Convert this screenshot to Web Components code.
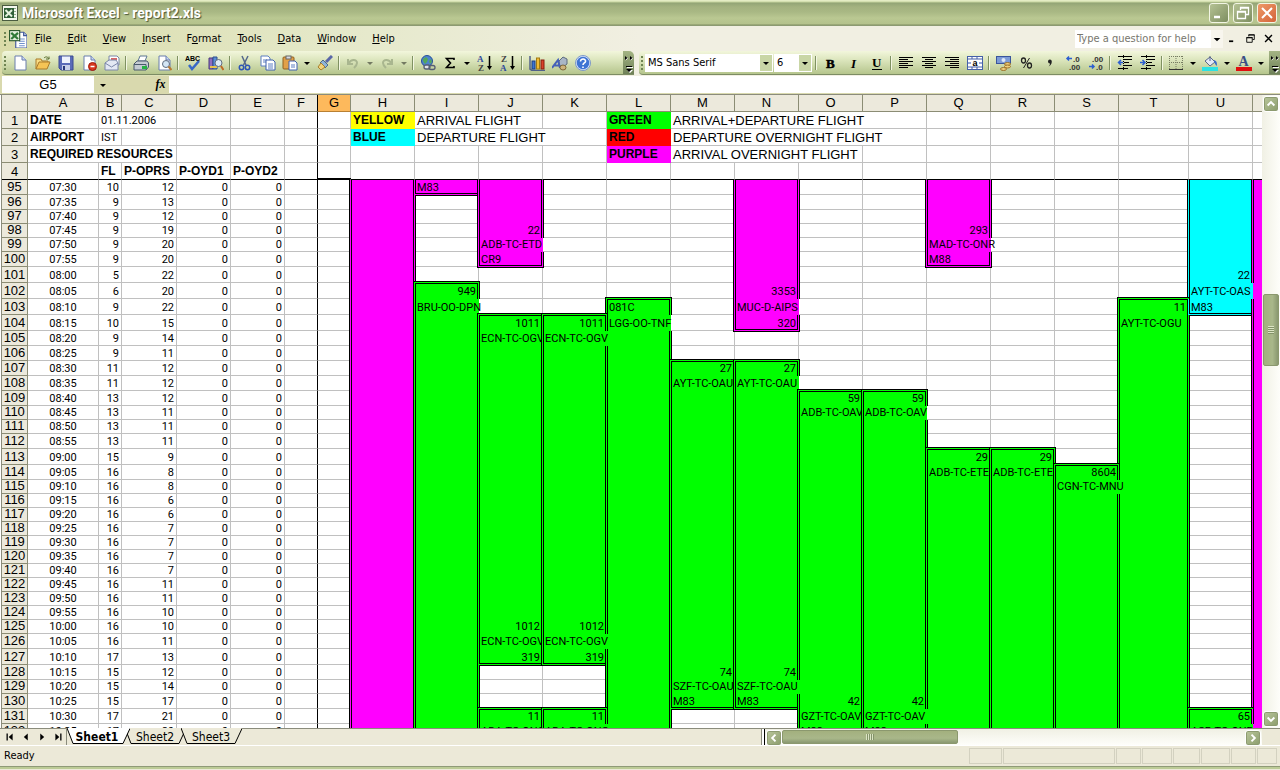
<!DOCTYPE html>
<html lang="en">
<head>
<meta charset="utf-8">
<title>Microsoft Excel - report2.xls</title>
<style>
  html, body { margin: 0; height: 100%; }
  body { display: flex; overflow: hidden; background: #ece9d8; color: #000; font: 11px/14px "DejaVu Sans Condensed", "Open Sans", sans-serif; }
  excel-window { flex: 1; min-width: 0; }
</style>
</head>
<body>
<excel-window></excel-window>

<script>
/* ---------- icons ---------- */
const PAGE = '<path d="M3 1h7l4 4v10H3z" fill="#fff" stroke="#6b7fae"/><path d="M10 1v4h4" fill="#c8d6f2" stroke="#6b7fae"/>';
const LINES = (rows) => rows.map(([x, y, w]) => `<path d="M${x} ${y}.5h${w}"/>`).join('');
const ICONS = {
  excel: '<rect x=".5" y=".5" width="15" height="15" fill="#f4f8ee" stroke="#4a5c40"/><path d="M10 3.500h4M10 6.500h4M10 9.500h4M10 12.500h4" stroke="#8fae8c"/><rect x="2" y="3" width="10" height="10" fill="#2f5f38"/><path d="M3.500 5l6.500 6.500M10 5l-6.500 6.500" stroke="#e6f2e0" stroke-width="2"/>',
  book: '<path d="M6 2h7l3 3v11H6z" fill="#fff" stroke="#40589a"/><path d="M13 2v3h3" fill="#b8c8ea" stroke="#40589a"/><path d="M9 8h5M9 10h5M9 12h5M9 14h5" stroke="#6f90cc"/><rect x=".5" y=".5" width="9" height="9" fill="#e4efdf" stroke="#2c5a2e"/><path d="M2 2.500l6 5.500M8 2.500L2 8" stroke="#2f7a38" stroke-width="2"/>',
  new: PAGE,
  open: '<path d="M1 14V4h5l1 2h6v3" fill="#f8dc84" stroke="#a97a2a"/><path d="M1 14l3-7h11l-3 7z" fill="#f5c455" stroke="#a97a2a"/><path d="M9 3c2-2 4-1 5 1m0 0l-3 0m3 0V1.500" fill="none" stroke="#5a6f30"/>',
  save: '<path d="M1 1h14v14H3l-2-2z" fill="#5a6bb8" stroke="#3a4a92"/><rect x="4" y="1.500" width="8" height="6.500" fill="#eef2fc"/><rect x="4" y="10" width="8" height="5" fill="#c7cfe8"/><rect x="5" y="11" width="2" height="4" fill="#28377a"/>',
  perm: PAGE + '<circle cx="11.500" cy="11.500" r="4" fill="#d8381f" stroke="#a01d0b"/><path d="M9.500 11.500h4" stroke="#fff" stroke-width="1.500"/>',
  mail: '<path d="M5 1h8l2 2v7H5z" fill="#fff" stroke="#7a86a8"/><path d="M7 4h6" stroke="#c33" stroke-width="1.500"/><path d="M1 8l4-3h7l2 3v7H1z" fill="#e3e8f3" stroke="#7a86a8"/><path d="M1 8l6.500 4L14 8" fill="none" stroke="#7a86a8"/>',
  print: '<path d="M5 6l2-5h7l-2 5z" fill="#fff" stroke="#5f7894"/><path d="M1 9l3-3h10l1.500 2v4L13 15H1z" fill="#c4cbd2" stroke="#4a5a6c"/><path d="M1 9.500h12v5" fill="none" stroke="#4a5a6c"/><rect x="9" y="11" width="5" height="3" fill="#25b343"/>',
  preview: PAGE + '<circle cx="10" cy="9" r="3.500" fill="#d4e6f5" stroke="#5f6c80"/><path d="M12.500 11.500l3 3.500" stroke="#b87a30" stroke-width="2"/>',
  spell: '<text x="0" y="6" font-family="Liberation Sans" font-size="7" font-weight="700">ABC</text><path d="M4 10l3 4 7-8" fill="none" stroke="#3768c6" stroke-width="2.500"/>',
  research: '<path d="M1 3h4v11H1z" fill="#8c6fc0" stroke="#49377d"/><path d="M5 2h4v12H5z" fill="#5b8fd6" stroke="#2f4f8e"/><path d="M2 12h7" stroke="#e8c44c" stroke-width="2"/><circle cx="10.500" cy="8" r="3.500" fill="#dcebf6" stroke="#5f6c80"/><path d="M13 11l2.500 4" stroke="#c06a24" stroke-width="2"/>',
  cut: '<path d="M5 1l4 9M11 1L6.500 10" stroke="#55688c" stroke-width="1.500"/><circle cx="4.500" cy="12.500" r="2.200" fill="none" stroke="#2d55b5" stroke-width="1.500"/><circle cx="10.500" cy="12.500" r="2.200" fill="none" stroke="#2d55b5" stroke-width="1.500"/>',
  copy: '<path d="M1 1h7l2 2v8H1z" fill="#fff" stroke="#5d7ec2"/><path d="M3 5h4M3 7h4" stroke="#5d7ec2"/><path d="M6 5h7l2 2v8H6z" fill="#fff" stroke="#3f61ae"/><path d="M8 9h5M8 11h5M8 13h5" stroke="#5d7ec2"/>',
  paste: '<rect x="1" y="2" width="11" height="12" rx="1" fill="#e2a048" stroke="#8f6020"/><rect x="4" y="1" width="5" height="3" fill="#d8dbe2" stroke="#666"/><path d="M7 6h6l2 2v7H7z" fill="#fff" stroke="#3f61ae"/><path d="M9 10h4M9 12h4" stroke="#5d7ec2"/>',
  brush: '<path d="M15 1l-6 6" stroke="#5a67a8" stroke-width="3"/><path d="M6 5l5 5-3 3-5-5z" fill="#8fb4d8" stroke="#4f6c8a"/><path d="M4 8l4 4-4 3-3-3z" fill="#f1d27a" stroke="#a8802e"/>',
  undo: '<path d="M3 4v5h5M3.500 8.500C6 4 12 4 12 8c0 2-1 3-3 5" fill="none" stroke="#a9b68f" stroke-width="2"/>',
  redo: '<path d="M13 4v5H8M12.500 8.500C10 4 4 4 4 8c0 2 1 3 3 5" fill="none" stroke="#a9b68f" stroke-width="2"/>',
  link: '<circle cx="7" cy="6" r="5.500" fill="#4d83cf" stroke="#27509a"/><path d="M3 4l3-2 2 2-1 3-2 2-2-3zM9 6l2-2 1 3-2 2z" fill="#54a85a"/><rect x="4" y="10" width="6" height="4" rx="2" fill="#dfe3ea" stroke="#555f73" stroke-width="1.300"/><rect x="9" y="10.500" width="6" height="4" rx="2" fill="none" stroke="#555f73" stroke-width="1.300"/>',
  sum: '<path d="M12 5V3.500H4.500l4 4.500-4 4.500H12V11" fill="none" stroke="#000" stroke-width="1.600"/>',
  az: '<text x="0" y="7" font-family="Liberation Serif" font-size="9" font-weight="700" fill="#2f4a9c">A</text><text x="1" y="15.500" font-family="Liberation Serif" font-size="9" font-weight="700" fill="#444">Z</text><path d="M12.500 1v12" stroke="#000" stroke-width="1.500"/><path d="M10 11h5l-2.500 4z"/>',
  za: '<text x="1" y="7" font-family="Liberation Serif" font-size="9" font-weight="700" fill="#444">Z</text><text x="0" y="15.500" font-family="Liberation Serif" font-size="9" font-weight="700" fill="#2f4a9c">A</text><path d="M12.500 1v12" stroke="#000" stroke-width="1.500"/><path d="M10 11h5l-2.500 4z"/>',
  chart: '<path d="M1 1v13l2 1.500h13" fill="none" stroke="#50608a" stroke-width="1.500"/><rect x="3" y="6" width="3" height="8" fill="#3b74d2" stroke="#1e3c80"/><rect x="7.500" y="3" width="3" height="11" fill="#f2bb32" stroke="#a17a13"/><rect x="12" y="5" width="3" height="9" fill="#d9422a" stroke="#861d0d"/>',
  draw: '<path d="M7 6l4-4 4 2v5l-4 3-4-2z" fill="#a9b6c6" stroke="#5d6b80"/><path d="M0 13L6 5l2 8M2.500 10.500h5" fill="none" stroke="#4661b8" stroke-width="2"/><ellipse cx="11" cy="12.500" rx="3" ry="2.500" fill="#cdb27a" stroke="#7d673a"/>',
  help: '<circle cx="8" cy="8" r="7" fill="#3f74d4" stroke="#d7e3f8" stroke-width="1.500"/><circle cx="8" cy="8" r="7.500" fill="none" stroke="#5679b8" stroke-width=".7"/><path d="M5.500 6.500C5.500 3 11 3.500 10.500 6.500 10 8 8 8 8 10M8 11.500v1.500" fill="none" stroke="#fff" stroke-width="1.600"/>',
  bold: '<text x="3" y="12.500" font-family="Liberation Serif" font-size="13" font-weight="700" stroke="#000" stroke-width=".5">B</text>',
  italic: '<text x="5" y="12.500" font-family="Liberation Serif" font-size="13" font-weight="700" font-style="italic">I</text>',
  under: '<text x="3" y="11.500" font-family="Liberation Serif" font-size="13" font-weight="700">U</text><path d="M3 14.500h10" stroke="#000"/>',
  left: `<g stroke="#000">${LINES([[1,2,14],[1,4,9],[1,6,14],[1,8,9],[1,10,14],[1,12,9]])}</g>`,
  center: `<g stroke="#000">${LINES([[1,2,14],[4,4,8],[1,6,14],[4,8,8],[1,10,14],[4,12,8]])}</g>`,
  right: `<g stroke="#000">${LINES([[1,2,14],[6,4,9],[1,6,14],[6,8,9],[1,10,14],[6,12,9]])}</g>`,
  merge: '<rect x=".5" y="1.500" width="15" height="13" fill="#fff" stroke="#4560a8"/><path d="M0 4h16M0 12h16M5 1v3M10 1v3M5 12v3M10 12v3" stroke="#4560a8"/><path d="M1 8h3M12 8h3" stroke="#2d4fae"/><text x="5.500" y="10.500" font-family="Liberation Sans" font-size="9" font-weight="700">a</text>',
  money: '<rect x=".5" y="1.500" width="14" height="7" fill="#7c9bd6" stroke="#3a559c"/><circle cx="7.500" cy="5" r="2" fill="#dce7f8"/><ellipse cx="11.500" cy="9" rx="3" ry="1.500" fill="#f0cf7c" stroke="#99712a"/><ellipse cx="11.500" cy="11.500" rx="3" ry="1.500" fill="#f0cf7c" stroke="#99712a"/><ellipse cx="7.500" cy="14" rx="3" ry="1.500" fill="#f0cf7c" stroke="#99712a"/>',
  percent: '<ellipse cx="4.500" cy="5.500" rx="2" ry="2.500" fill="none" stroke="#222" stroke-width="1.300"/><ellipse cx="10.500" cy="10.500" rx="2" ry="2.500" fill="none" stroke="#222" stroke-width="1.300"/><path d="M10.500 3L4.500 13" stroke="#222"/>',
  comma: '<path d="M6 6.500a1.900 1.900 0 1 1 3.800 0C9.800 9 8.500 10.500 6.500 11.500 7.800 10.500 8 9 7.900 8.400A1.900 1.900 0 0 1 6 6.500z" fill="#222"/>',
  incdec: '<path d="M7 3.500H2m2-2l-2 2 2 2" fill="none" stroke="#2d5fd0" stroke-width="1.500"/><text x="8" y="7" font-family="Liberation Sans" font-size="8" font-weight="700" fill="#333">.0</text><text x="4" y="15" font-family="Liberation Sans" font-size="8" font-weight="700" fill="#333">.00</text>',
  decdec: '<path d="M1 11.500h5m-2-2l2 2-2 2" fill="none" stroke="#2d5fd0" stroke-width="1.500"/><text x="4" y="7" font-family="Liberation Sans" font-size="8" font-weight="700" fill="#333">.00</text><text x="8" y="15" font-family="Liberation Sans" font-size="8" font-weight="700" fill="#333">.0</text>',
  outdent: `<g stroke="#000">${LINES([[1,1,14],[7,4,8],[7,7,5],[7,10,8],[1,13,10]])}<path d="M6.500 0v16" stroke-dasharray="1 1"/></g><path d="M6 7.500H2m2-2.500L1.500 7.500 4 10" fill="none" stroke="#2d5fd0" stroke-width="1.500"/>`,
  indent: `<g stroke="#000">${LINES([[1,1,14],[7,4,8],[7,7,5],[7,10,8],[1,13,10]])}<path d="M6.500 0v16" stroke-dasharray="1 1"/></g><path d="M0 7.500h4M2.500 5L5 7.500 2.500 10" fill="none" stroke="#2d5fd0" stroke-width="1.500"/>`,
  borders: '<path d="M1.500 1v13M1 1.500h13M14.500 1v13M8 1v13M1 7.500h13" fill="none" stroke="#777d62" stroke-dasharray="1 1"/><path d="M1 14.500h14" stroke="#333"/>',
  fill: '<path d="M3 6l5-4 5 5-5 4z" fill="#e3e9f5" stroke="#5a6788"/><path d="M8 1v5" stroke="#5a6788"/><path d="M12 5c3 1 3 3 3 6-2-1-2-3-3-4z" fill="#3b6cc8"/><rect x="0" y="12" width="16" height="4" fill="#2ce3e3"/>',
  color: '<text x="2.500" y="11" font-family="Liberation Serif" font-size="14" font-weight="700" fill="#3a4f86">A</text><rect x="0" y="12" width="16" height="4" fill="#e00f0f"/>',
  arrow: '<path d="M5 7h6L8 10z"/>',
  more: '<path d="M3.500 5.500L6 7.500l-2.500 2zM8.500 5.500L11 7.500l-2.500 2zM5 16h6v1H5zM5 19h6l-3 3z" fill="#fff"/><path d="M3 5l2.500 2L3 9zM8 5l2.500 2L8 9zM4 15h6v1H4zM4 18h6l-3 3z"/>',
  chevL: '<path d="M10 3.500L5.500 8l4.500 4.500" fill="none" stroke="#fff" stroke-width="2.500"/>',
  chevR: '<path d="M6 3.500L10.500 8 6 12.500" fill="none" stroke="#fff" stroke-width="2.500"/>',
  chevU: '<path d="M3.500 10L8 5.500l4.500 4.500" fill="none" stroke="#fff" stroke-width="2.500"/>',
  chevD: '<path d="M3.500 6L8 10.500 12.500 6" fill="none" stroke="#fff" stroke-width="2.500"/>',
  first: '<path d="M4 4h1.500v8H4zM11 4v8L6.500 8z"/>',
  prev: '<path d="M10 4v8L5.500 8z"/>',
  next: '<path d="M6 4v8l4.500-4z"/>',
  last: '<path d="M5 4v8l4.500-4zM10.500 4H12v8h-1.500z"/>',
  min: '<path d="M3 12h6" stroke="currentColor" stroke-width="2.500"/>',
  restore: '<path d="M5.500 5V2.500h8v7H11M5 3h9M2.500 6.500h8v7h-8zM2 7h9" fill="none" stroke="currentColor" stroke-width="1.300"/>',
  close: '<path d="M3 3l10 10M13 3L3 13" stroke="currentColor" stroke-width="2"/>'
};

const define = (name, html, setup) => customElements.define(name, class extends HTMLElement {
  constructor() {
    super();
    const t = document.createElement('template');
    t.innerHTML = html;
    this.attachShadow({ mode: 'open' }).append(t.content.cloneNode(true));
    if (setup) setup(this.shadowRoot, this);
  }
});

customElements.define('xl-icon', class extends HTMLElement {
  connectedCallback() {
    if (this.shadowRoot) return;
    const name = this.getAttribute('name');
    this.attachShadow({ mode: 'open' }).innerHTML = `
      <style>:host{display:inline-block;width:16px;height:16px;flex:none}svg{display:block;width:100%;height:100%}</style>
      <svg viewBox="0 0 ${name === 'more' ? '14 24' : '16 16'}" aria-hidden="true">${ICONS[name]}</svg>`;
  }
});

/* ---------- title bar ---------- */
define('title-bar', `
<style>
  :host { display: flex; align-items: center; height: 26px; box-sizing: border-box; padding: 0 3px 0 2px; gap: 4px;
    background: linear-gradient(#e4ecc4 0 1px, #c4d29c 2px, #93a476 3px, #a4b280 7px, #a9b884 12px, #bac892 18px, #b4c28c 24px, #818f62 25px); border-bottom: 1px solid #8c9a72; }
  h1 { flex: 1; margin: 0; color: #fff; font: bold 14px/18px Roboto, sans-serif; text-shadow: 1px 1px 1px #4a5538; white-space: nowrap; }
  button { width: 20px; height: 20px; padding: 1px; border: 1px solid #f2f5e4; border-radius: 3px; background: linear-gradient(135deg, #b5c294, #7e8e60); color: #fff; display: grid; place-items: center; }
  button.close { background: linear-gradient(135deg, #ee9a68, #d4643a); }
</style>
<xl-icon name="excel"></xl-icon>
<h1>Microsoft Excel - report2.xls</h1>
<button aria-label="Minimize"><xl-icon name="min"></xl-icon></button>
<button aria-label="Restore"><xl-icon name="restore"></xl-icon></button>
<button class="close" aria-label="Close"><xl-icon name="close"></xl-icon></button>`);

/* ---------- menu bar ---------- */
define('menu-bar', `
<style>
  :host { display: flex; align-items: center; height: 25px; padding: 0 3px 0 4px; background: linear-gradient(90deg, #d9dba8, #e4e8c8 25%, #f1efe2 50%); }
  .grip { width: 2px; height: 14px; background: repeating-linear-gradient(#6f8452 0 2px, transparent 2px 4px); margin-right: 3px; }
  xl-icon { width: 18px; height: 18px; }
  nav { display: flex; flex: 1; }
  button { border: 0; background: none; padding: 0 8px; font: inherit; color: #000; }
  input { width: 136px; height: 18px; box-sizing: border-box; border: 0; padding: 0 2px; background: #fff; font: inherit; }
  input::placeholder { color: #77766d; opacity: 1; }
  .drop { padding: 0; width: 12px; height: 18px; background: #f8f6ee; display: grid; place-items: center; justify-content: center; overflow: hidden; }
  .ask { display: flex; background: #fff; }
  .win { padding: 0; width: 18px; display: grid; place-items: center; }
  .win xl-icon { width: 11px; height: 11px; }
</style>
<span class="grip"></span>
<xl-icon name="book"></xl-icon>
<nav></nav>
<span class="ask"><input aria-label="Type a question for help" placeholder="Type a question for help"><button class="drop" aria-label="Recent questions"><xl-icon name="arrow"></xl-icon></button></span>
<button class="win" aria-label="Minimize workbook"><xl-icon name="min"></xl-icon></button>
<button class="win" aria-label="Restore workbook"><xl-icon name="restore"></xl-icon></button>
<button class="win" aria-label="Close workbook"><xl-icon name="close"></xl-icon></button>`,
root => {
  root.querySelector('nav').innerHTML = ['_File', '_Edit', '_View', '_Insert', 'F_ormat', '_Tools', '_Data', '_Window', '_Help']
    .map(m => `<button>${m.replace(/_(.)/, '<u>$1</u>')}</button>`).join('');
});

/* ---------- tool bars: "|" is a separator, a trailing "+" adds a drop-down arrow ---------- */
customElements.define('tool-bar', class extends HTMLElement {
  connectedCallback() {
    if (this.shadowRoot) return;
    const items = this.getAttribute('items').split(' ').map(i => {
      if (i === '|') return '<i class="sep"></i>';
      const n = i.replace('+', '');
      const dim = n === 'undo' || n === 'redo' ? ' disabled' : '';
      return i.endsWith('+')
        ? `<button class="split" aria-label="${n}"${dim}><xl-icon name="${n}"></xl-icon></button><button class="more" aria-label="${n} options"${dim}><xl-icon name="arrow"></xl-icon></button>`
        : `<button aria-label="${n}"><xl-icon name="${n}"></xl-icon></button>`;
    }).join('');
    this.attachShadow({ mode: 'open' }).innerHTML = `
    <style>
      :host { display: flex; align-items: center; height: 24px; box-sizing: border-box; overflow: hidden; border-bottom: 1px solid #7c8c64; border-radius: 4px 5px 0 4px;
        background: linear-gradient(#f2f6dc, #dbe5bc 40%, #b5c58c); }
      .grip { flex: none; width: 2px; height: 14px; margin: 0 2px; background: repeating-linear-gradient(#6f8452 0 2px, transparent 2px 4px); }
      button { flex: none; width: 23px; height: 22px; border: 0; padding: 0; background: none; display: grid; place-items: center; }
      .split { width: 22px; }
      .more { width: 12px; overflow: hidden; justify-content: center; }
      .more:disabled { opacity: .45; }
      .sep { flex: none; width: 1px; height: 14px; margin: 0 3px 0 2px; background: #7f9162; box-shadow: 1px 0 #f3f7e2; }
      .end { width: 11px; height: 24px; margin-left: auto; background: linear-gradient(#a4b484, #6d7f56); justify-content: center; overflow: hidden; }
      .end xl-icon { width: 14px; height: 24px; }
    </style>
    <span class="grip"></span><slot></slot>${items}<button class="end" aria-label="Toolbar options"><xl-icon name="more"></xl-icon></button>`;
  }
});

/* ---------- combo box ---------- */
customElements.define('combo-box', class extends HTMLElement {
  connectedCallback() {
    if (this.shadowRoot) return;
    this.attachShadow({ mode: 'open' }).innerHTML = `
    <style>
      :host { display: grid; grid-template-columns: 1fr 12px; align-items: center; flex: none; height: 18px; margin-right: 1px; background: #fff; border: 1px solid #fff; box-sizing: border-box; overflow: hidden; }
      select { grid-area: 1 / 1 / 2 / 3; appearance: none; border: 0; padding: 0 2px; height: 16px; background: none; font: inherit; color: #000; }
      span { grid-area: 1 / 2; height: 16px; display: grid; place-items: center; justify-content: center; background: #c9d6a6; pointer-events: none; }
    </style>
    <select aria-label="${this.getAttribute('label')}"><option>${this.getAttribute('value')}</option></select><span><xl-icon name="arrow"></xl-icon></span>`;
  }
});

/* ---------- formula bar ---------- */
define('formula-bar', `
<style>
  :host { display: flex; height: 17px; padding: 0 0 1px 2px; background: #d9d9ae; }
  input { border: 0; padding: 0; background: #fff; min-width: 0; }
  .name { width: 92px; text-align: center; font: 13px/17px "Liberation Sans", sans-serif; }
  .formula { flex: 1; }
  button { border: 0; padding: 0; background: none; color: #000; display: grid; place-items: center; width: 18px; }
  .fx { width: 17px; margin-left: 40px; font: italic bold 12px/17px "Liberation Serif", serif; }
</style>
<input class="name" aria-label="Name box" value="G5">
<button aria-label="Names"><xl-icon name="arrow"></xl-icon></button>
<button class="fx" aria-label="Insert function">fx</button>
<input class="formula" aria-label="Formula">`);

/* ---------- scroll bar ---------- */
customElements.define('scroll-bar', class extends HTMLElement {
  connectedCallback() {
    if (this.shadowRoot) return;
    const v = this.hasAttribute('vertical');
    const [a, b, c] = this.getAttribute('parts').split(' ');
    this.attachShadow({ mode: 'open' }).innerHTML = `
    <style>
      :host { display: flex; flex-direction: ${v ? 'column' : 'row'}; align-items: stretch; box-sizing: border-box; padding: 1px; background: linear-gradient(${v ? '90deg' : '180deg'}, #f0f0e4, #fefefa); }
      button { flex: none; width: 16px; height: 16px; padding: 0; border: 1px solid #fff; border-radius: 3px; background: linear-gradient(135deg, #b9c69b, #8b9c6c); box-shadow: inset 0 0 0 1px #8d9b70; display: grid; place-items: center; }
      xl-icon { width: 12px; height: 12px; }
      .thumb { flex: ${b} 0 0; border-radius: 2px; background: linear-gradient(${v ? '90deg' : '180deg'}, #a3b07e, #a9b78a 60%, #8a9870); border: 1px solid #8b986e; display: grid; place-items: center; }
      .thumb::after { content: ""; width: ${v ? 6 : 8}px; height: ${v ? 8 : 6}px; background: repeating-linear-gradient(${v ? '180deg' : '90deg'}, #dce4c4 0 1px, #84936a 1px 2px); }
    </style>
    <button aria-label="Scroll back"><xl-icon name="${v ? 'chevU' : 'chevL'}"></xl-icon></button>
    <span style="flex:${a} 0 0"></span><span class="thumb"></span><span style="flex:${c} 0 0"></span>
    <button aria-label="Scroll forward"><xl-icon name="${v ? 'chevD' : 'chevR'}"></xl-icon></button>`;
  }
});

/* ---------- worksheet ---------- */
const COLS = [['A',71],['B',23],['C',55],['D',54],['E',54],['F',33],['G',33],['H',64],['I',64],['J',64],['K',64],['L',64],['M',64],['N',64],['O',64],['P',64],['Q',64],['R',64],['S',64],['T',70],['U',64],['V',64]];
const FIRST = 95, LAST = 132;
const HEIGHTS = [15,15,14,14,14,15,16,16,16,16,15,15,15,15,15,14,14,15,16,15,14,14,14,14,14,14,14,14,14,14,14,15,16,15,14,15,15,15];
const FL = [10,9,9,9,9,9,5,6,9,10,9,9,11,11,13,13,13,13,15,16,16,16,16,16,16,16,16,16,16,16,16,16,17,15,15,15,17,17];
const OPRS = [12,13,12,19,20,20,22,20,22,15,14,11,12,12,12,11,11,11,9,8,8,6,6,7,7,7,7,11,11,10,10,11,13,12,14,17,21,20];

/* Flight bars: column, first row (0 = starts above the view), last row (999 = runs below it), colour, texts by row. */
const BARS = [
  ['H', 0, 999, 'purple', {}],
  ['I', 0, 95, 'purple', {95: 'M83'}],
  ['I', 102, 999, 'green', {102: '949', 103: 'BRU-OO-DPN'}],
  ['J', 0, 100, 'purple', {98: '22', 99: 'ADB-TC-ETD', 100: 'CR9'}],
  ...['J', 'K'].flatMap(c => [
    [c, 104, 127, 'green', {104: '1011', 105: 'ECN-TC-OGV', 125: '1012', 126: 'ECN-TC-OGV', 127: '319'}],
    [c, 131, 999, 'green', {131: '11', 132: 'ADA-TC-ONC'}]]),
  ['L', 103, 999, 'green', {103: '081C', 104: 'LGG-OO-TNF'}],
  ['N', 0, 104, 'purple', {102: '3353', 103: 'MUC-D-AIPS', 104: '320'}],
  ...['M', 'N'].map(c => [c, 107, 130, 'green', {107: '27', 108: 'AYT-TC-OAU', 128: '74', 129: 'SZF-TC-OAU', 130: 'M83'}]),
  ...['O', 'P'].map(c => [c, 109, 999, 'green', {109: '59', 110: 'ADB-TC-OAV', 130: '42', 131: 'GZT-TC-OAV', 132: 'M83'}]),
  ['Q', 0, 100, 'purple', {98: '293', 99: 'MAD-TC-ONR', 100: 'M88'}],
  ...['Q', 'R'].map(c => [c, 113, 999, 'green', {113: '29', 114: 'ADB-TC-ETE'}]),
  ['S', 114, 999, 'green', {114: '8604', 115: 'CGN-TC-MNU'}],
  ['T', 103, 999, 'green', {103: '11', 104: 'AYT-TC-OGU'}],
  ['U', 0, 103, 'blue', {101: '22', 102: 'AYT-TC-OAS', 103: 'M83'}],
  ['U', 131, 999, 'green', {131: '65', 132: 'ASR-TC-ONR'}],
  ['V', 0, 999, 'purple', {}]
];
const letters = COLS.map(c => c[0]);
const barAt = (ci, row) => BARS.find(b => b[0] === letters[ci] && row >= b[1] && row <= b[2]);
const textAt = (ci, row) => barAt(ci, row)?.[4][row];
const spills = (ci, row) => letters[ci] !== 'T' && /-/.test(textAt(ci, row) || '') && !textAt(ci + 1, row);

function barCell(ci, row) {
  const bar = barAt(ci, row);
  if (!bar) return '<td></td>';
  const [, from, to, colour] = bar;
  const text = textAt(ci, row) || '';
  const cls = ['bar', colour];
  if (from === row) cls.push('t');
  if (to === row) cls.push('b');
  if (!spills(ci - 1, row)) cls.push('l');
  if (!spills(ci, row)) cls.push('r');
  if (/^\d+$/.test(text)) cls.push('n');
  if (/-/.test(text) && textAt(ci + 1, row)) cls.push('clip');
  return `<td class="${cls.join(' ')}">${text && `<span>${text}</span>`}</td>`;
}

define('work-sheet', `
<style>
  :host { display: flex; min-height: 0; overflow: hidden; border-top: 1px solid #8b8c7c; background: #fff; }
  .view { flex: 1; min-width: 0; overflow: hidden; border-left: 1px solid #8b8c7c; margin-left: 1px; }
  scroll-bar { width: 18px; flex: none; }
  table { table-layout: fixed; width: 0; border-collapse: separate; border-spacing: 0; font: 11px/13px Roboto, "Liberation Sans", sans-serif; }
  th, td { box-sizing: border-box; padding: 0 2px; border: 0 solid #c0c0c0; border-width: 0 1px 1px 0; white-space: nowrap; text-align: left; vertical-align: bottom; position: relative; }
  th { background: #ece9dc; border-color: #8b8c74; text-align: center; font: 13px/12px "Liberation Sans", sans-serif; padding: 0 0 1px; }
  tr.head th { vertical-align: middle; padding: 0; }
  th.active { background: #fdb95c; border-bottom-color: #b98032; }
  .f { border-right-color: #000; }
  tr.freeze th, tr.freeze td { border-bottom-color: #000; }
  tr.freeze .cursor::after { content: ""; position: absolute; left: -1px; right: -1px; bottom: 0; height: 1px; background: #000; }
  .top td { font: 13px/15px "Liberation Sans", sans-serif; }
  .top b { font: bold 12px/15px "Liberation Sans", sans-serif; }
  .top .s { font: 11px/15px Roboto, sans-serif; }
  .c { text-align: center; }
  .n { text-align: right; }
  .yellow { --fill: #ff0; } .blue { --fill: #0ff; } .green { --fill: #0f0; } .red { --fill: #f00; } .purple { --fill: #f0f; }
  .key { background: var(--fill); border-color: var(--fill); }
  .bar::before { content: ""; position: absolute; z-index: 1; inset: 0 -1px -1px 0; background: var(--fill); border: 0 double #000; }
  .bar.l::before { left: -2px; border-left-width: 3px; }
  .bar.r::before { right: -2px; border-right-width: 3px; }
  .bar.t::before { top: -2px; border-top-width: 3px; }
  .bar.b::before { bottom: -2px; border-bottom-width: 3px; }
  span { position: relative; z-index: 2; }
  .clip span { display: block; overflow: hidden; margin-right: -2px; }
</style>
<div class="view"><table></table></div>
<scroll-bar vertical parts="184 71 348"></scroll-bar>`,
root => {
  const cols = `<colgroup><col style="width:26px">${COLS.map(c => `<col style="width:${c[1]}px">`).join('')}</colgroup>`;
  const head = `<tr class="head" style="height:17px"><th></th>${letters.map(l => `<th scope="col" class="${l === 'G' ? 'active' : l === 'F' ? 'f' : ''}">${l}</th>`).join('')}</tr>`;
  const blanks = n => '<td></td>'.repeat(n);
  const top = [
    `<td><b>DATE</b></td><td colspan="2" class="s">01.11.2006</td>${blanks(2)}<td class="f"></td><td></td><td class="key yellow"><b>YELLOW</b></td><td colspan="2">ARRIVAL FLIGHT</td><td></td><td class="key green"><b>GREEN</b></td><td colspan="4">ARRIVAL+DEPARTURE FLIGHT</td>${blanks(6)}`,
    `<td><b>AIRPORT</b></td><td class="s">IST</td>${blanks(3)}<td class="f"></td><td></td><td class="key blue"><b>BLUE</b></td><td colspan="3">DEPARTURE FLIGHT</td><td class="key red"><b>RED</b></td><td colspan="4">DEPARTURE OVERNIGHT FLIGHT</td>${blanks(6)}`,
    `<td colspan="3"><b>REQUIRED RESOURCES</b></td>${blanks(2)}<td class="f"></td>${blanks(5)}<td class="key purple"><b>PURPLE</b></td><td colspan="3">ARRIVAL OVERNIGHT FLIGHT</td>${blanks(7)}`,
    `<td></td><td><b>FL</b></td><td><b>P-OPRS</b></td><td><b>P-OYD1</b></td><td><b>P-OYD2</b></td><td class="f"></td><td class="cursor"></td>${blanks(15)}`
  ].map((r, i) => `<tr class="top${i === 3 ? ' freeze' : ''}" style="height:17px"><th scope="row">${i + 1}</th>${r}</tr>`).join('');
  let body = '';
  for (let row = FIRST, i = 0; row <= LAST; row++, i++) {
    const m = 450 + i * 5, p = x => String(x).padStart(2, '0');
    body += `<tr style="height:${HEIGHTS[i]}px"><th scope="row">${row}</th><td class="c">${p(Math.floor(m / 60))}:${p(m % 60)}</td><td class="n">${FL[i]}</td><td class="n">${OPRS[i]}</td><td class="n">0</td><td class="n">0</td><td class="f"></td><td></td>`;
    for (let ci = 7; ci < COLS.length; ci++) body += barCell(ci, row);
    body += '</tr>';
  }
  root.querySelector('table').innerHTML = `${cols}<thead>${head}${top}</thead><tbody>${body}</tbody>`;
});

/* ---------- sheet tabs ---------- */
define('sheet-tabs', `
<style>
  :host { display: flex; height: 18px; box-sizing: border-box; border-top: 1px solid #8b8c7c; border-bottom: 1px solid #fff; background: #ece9d8; padding-left: 2px; }
  .nav { display: flex; border-right: 1px solid #8b8c7c; }
  .nav button { width: 16px; border: 0; padding: 0; background: none; display: grid; place-items: center; }
  .nav xl-icon { width: 14px; height: 14px; }
  .tabs { flex: 1; display: flex; min-width: 0; border-right: 2px solid #fff; box-shadow: inset -1px 0 #8b8c7c; }
  .tab { position: relative; border: 0; padding: 0 0 0 4px; background: none; font: 12px/15px "DejaVu Sans Condensed", sans-serif; color: #000; }
  .tab svg { position: absolute; inset: -1px -5px 0 0; width: calc(100% + 5px); height: 16px; }
  .tab span { position: relative; }
  .tab.on { font-weight: bold; z-index: 1; padding-left: 2px; }
  scroll-bar { flex: 0 0 39%; border-left: 1px solid #000; }
  .corner { width: 18px; }
</style>
<div class="nav"><button aria-label="First sheet"><xl-icon name="first"></xl-icon></button><button aria-label="Previous sheet"><xl-icon name="prev"></xl-icon></button><button aria-label="Next sheet"><xl-icon name="next"></xl-icon></button><button aria-label="Last sheet"><xl-icon name="last"></xl-icon></button></div>
<div class="tabs"></div>
<scroll-bar parts="0 175 289"></scroll-bar>
<span class="corner"></span>`,
root => {
  root.querySelector('.tabs').innerHTML = ['Sheet1', 'Sheet2', 'Sheet3'].map((s, i) => {
    const w = i ? 61 : 63, bg = i ? '#ece9d8' : '#fff';
    return `<button class="tab${i ? '' : ' on'}" style="width:${w - 5}px"><svg viewBox="0 0 ${w} 16" preserveAspectRatio="none"><path d="M0 0l6 15h${w - 13}l7-15z" fill="${bg}"/><path d="M0 0l6 15.500h${w - 13}l7-15" fill="none" stroke="#000"/></svg><span>${s}</span></button>`;
  }).join('');
});

/* ---------- status bar ---------- */
define('status-bar', `
<style>
  :host { display: flex; align-items: center; gap: 1px; height: 20px; padding: 0 3px 0 4px; background: #ece9d8; border-bottom: 1px solid #8f9a78; box-shadow: 0 2px #bccb96; margin-bottom: 3px; }
  output { flex: 1; }
  i { height: 14px; border: 1px solid #d3d1c0; box-sizing: content-box; }
</style>
<output>Ready</output>`,
root => {
  for (const w of [31, 110, 23, 28, 25, 27, 23, 18]) {
    const i = document.createElement('i');
    i.style.width = w + 'px';
    root.append(i);
  }
});

/* ---------- window ---------- */
define('excel-window', `
<style>
  :host { display: flex; flex-direction: column; height: 100vh; overflow: hidden; background: #ece9d8; }
  title-bar, menu-bar, formula-bar, sheet-tabs, status-bar { flex: none; }
  .bars { flex: none; display: flex; gap: 5px; padding: 0 0 1px 2px; background: linear-gradient(90deg, #d9dba8, #e4e8c8 25%, #f1efe2 50%); }
  .bars > :first-child { flex: 0 1 632px; }
  .bars > :last-child { flex: 1 1 641px; border-top-right-radius: 0; }
  .font { width: 128px; }
  .size { width: 38px; }
  work-sheet { flex: 1; }
</style>
<title-bar></title-bar>
<menu-bar></menu-bar>
<div class="bars">
  <tool-bar items="new open save perm mail | print preview | spell research | cut copy paste+ brush | undo+ redo+ | link sum+ az za | chart draw help"></tool-bar>
  <tool-bar items="| bold italic under | left center right merge | money percent comma incdec decdec | outdent indent | borders+ fill+ color+"><combo-box class="font" label="Font" value="MS Sans Serif"></combo-box><combo-box class="size" label="Font size" value="6"></combo-box></tool-bar>
</div>
<formula-bar></formula-bar>
<work-sheet></work-sheet>
<sheet-tabs></sheet-tabs>
<status-bar></status-bar>`);
</script>
</body>
</html>
